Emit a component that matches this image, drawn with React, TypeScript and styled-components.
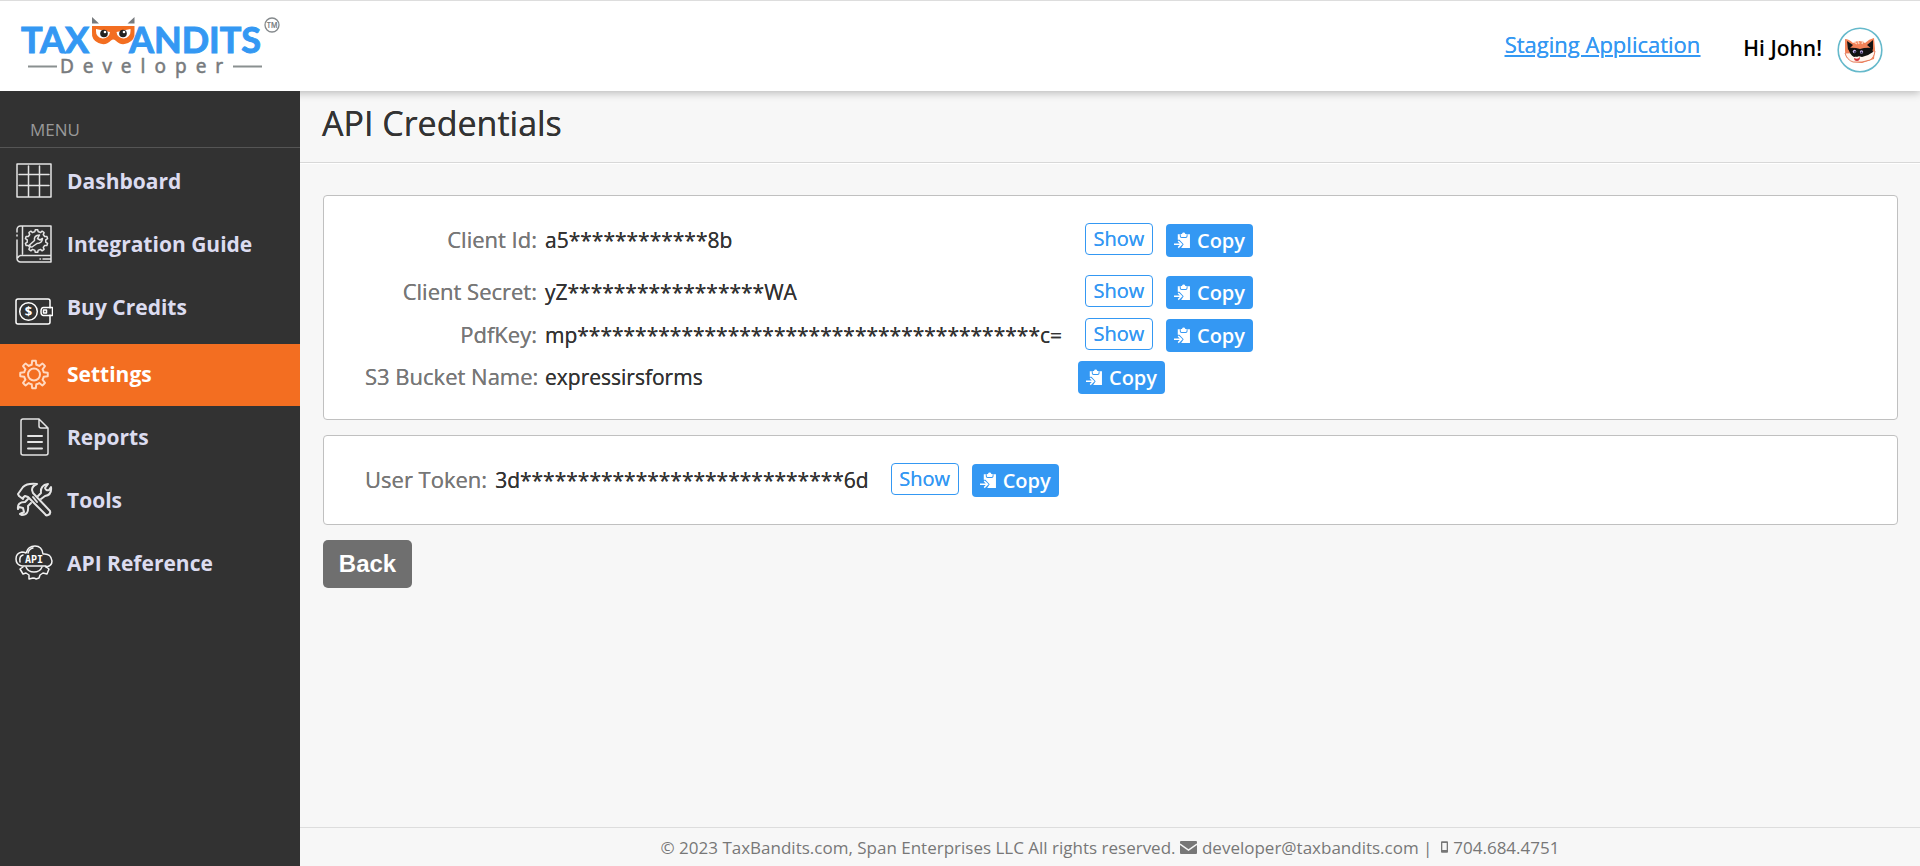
import React, { useState } from 'react';
import styled, { createGlobalStyle, css } from 'styled-components';

const GlobalStyle = createGlobalStyle`
  *, *::before, *::after { box-sizing: border-box; }
  body {
    margin: 0;
    background: #f7f7f7;
    color: #333;
    font-family: 'Open Sans', 'Noto Sans', sans-serif;
    font-size: 21px;
  }
`;

/* Medium weight: the regular face with its edges firmed up by a sharp shadow. */
const medium = css`
  font-family: 'Open Sans', sans-serif;
  font-weight: 500;
  text-shadow: 0 0 currentColor;
`;

const Shell = styled.div`
  display: flex;
  flex-direction: column;
  min-height: 100vh;
`;

const Header = styled.header`
  display: flex;
  justify-content: space-between;
  height: 91px;
  padding: 0 37px 0 20px;
  border-top: 1px solid #ddd;
  background: #fff;
  box-shadow: 0 2px 8px rgba(0, 0, 0, 0.25);
`;

const HomeLink = styled.a`
  display: block;
  padding-top: 15px;
`;

const UserArea = styled.div`
  display: flex;
  align-items: flex-start;
  padding-top: 26px;
`;

const StagingLink = styled.a`
  ${medium}
  margin-right: 43px;
  color: #3498f3;
  font-size: 22px;
  line-height: 34px;
`;

const Greeting = styled.span`
  margin-right: 15px;
  color: #000;
  font-weight: 600;
  line-height: 42px;
`;

const AvatarButton = styled.button`
  width: 46px;
  height: 46px;
  padding: 0;
  border: 0;
  background: none;
`;

const Body = styled.div`
  display: flex;
  flex: 1;
`;

const Sidebar = styled.nav`
  position: relative;
  flex: none;
  width: 300px;
  background: #323232;
`;

const MenuTitle = styled.div`
  height: 57px;
  padding: 28px 30px 0;
  border-bottom: 1px solid #555;
  color: #999;
  font-size: 17px;
  line-height: 22px;
`;

const MenuList = styled.ul`
  display: flex;
  flex-direction: column;
  gap: 1px;
  margin: 0;
  padding: 3px 0 0;
  list-style: none;
`;

const MenuLink = styled.a<{ $active?: boolean; $tall?: boolean }>`
  display: flex;
  align-items: center;
  gap: 14px;
  height: 62px;
  padding: 0 0 2px 15px;
  color: ${(p) => (p.$active ? '#fff' : '#dcdcf0')};
  background: ${(p) => (p.$active ? '#f36e21' : 'transparent')};
  font-weight: 700;
  text-decoration: none;
  ${(p) =>
    p.$tall &&
    css`
      margin-bottom: 4px;
    `}
`;

const Main = styled.div`
  display: flex;
  flex: 1;
  flex-direction: column;
  min-width: 0;
`;

const PageTitle = styled.h1`
  ${medium}
  height: 72px;
  margin: 0;
  padding-left: 22px;
  border-bottom: 1px solid #d8d8d8;
  box-shadow: 0 1px 0 #fff;
  font-size: 34px;
  line-height: 64px;
`;

const Content = styled.main`
  display: flex;
  flex: 1;
  flex-direction: column;
  align-items: stretch;
  gap: 15px;
  padding: 32px 22px 32px 23px;
`;

const Panel = styled.section<{ $tight?: boolean }>`
  padding: 27px 41px ${(p) => (p.$tight ? '25px' : '27px')};
  border: 1px solid #c0c0c0;
  border-radius: 4px;
  background: #fff;
`;

const Row = styled.div<{ $after?: number }>`
  display: flex;
  height: 34px;
  margin-bottom: ${(p) => p.$after ?? 0}px;
  line-height: 34px;
`;

const Label = styled.span<{ $column?: boolean }>`
  ${medium}
  flex: none;
  width: ${(p) => (p.$column ? '172px' : 'auto')};
  margin-right: 8px;
  color: #777;
  font-size: 22px;
  line-height: 32px;
  text-align: right;
  white-space: nowrap;
`;

const Value = styled.span<{ $column?: boolean }>`
  ${medium}
  flex: none;
  width: ${(p) => (p.$column ? '533px' : 'auto')};
  margin-right: ${(p) => (p.$column ? '0' : '15px')};
`;

const ShowButton = styled.button`
  ${medium}
  flex: none;
  width: 68px;
  height: 32px;
  margin: 0 13px 0 7px;
  padding: 0;
  border: 1px solid #3498f3;
  border-radius: 4px;
  color: #3498f3;
  background: #fff;
  font-size: 20px;
  line-height: 30px;
`;

const CopyButton = styled.button`
  display: flex;
  flex: none;
  align-items: center;
  gap: 7px;
  width: 87px;
  height: 33px;
  margin-top: 1px;
  padding: 0 8px;
  border: 0;
  border-radius: 4px;
  color: #fff;
  background: #3498f3;
  font: 600 20px/32px 'Open Sans', sans-serif;
`;

const BackButton = styled.button`
  align-self: flex-start;
  width: 89px;
  height: 48px;
  padding: 0;
  border: 0;
  border-radius: 5px;
  color: #fff;
  background: #6f6f6f;
  font: 700 24px 'Liberation Sans', Arial, sans-serif;
`;

const Footer = styled.footer`
  display: flex;
  align-items: center;
  justify-content: center;
  height: 39px;
  border-top: 1px solid #ddd;
  color: #777;
  font-size: 17px;
  white-space: pre;
`;

const FooterLink = styled.a`
  display: inline-flex;
  align-items: center;
  gap: 5px;
  color: inherit;
  text-decoration: none;
`;

function Logo() {
  return (
    <svg width="262" height="68" viewBox="20 16 262 68" role="img" aria-label="TaxBandits Developer">
      <g fill="#3498f3" stroke="#3498f3" strokeWidth="1" fontFamily="Lato, sans-serif" fontWeight="700" fontSize="36">
        <text x="21" y="53">TAX</text>
        <text x="129" y="53">ANDITS</text>
      </g>
      <path d="M92 17l7 6.500h-7zM134.500 17l-7 6.500h7z" fill="#777b7e" />
      <path d="M92 26h42.500v6a11 11 0 0 1-19 8.500 3.500 3.500 0 0 0-4.500 0A11 11 0 0 1 92 32z" fill="#f36e21" />
      <path d="M96 29l14 3a7 7 0 1 1-14-1zM130.500 29l-14 3a7 7 0 1 0 14-1z" fill="#fff" />
      <circle cx="104" cy="33.500" r="3.800" fill="#222" />
      <circle cx="123" cy="33.500" r="3.800" fill="#222" />
      <circle cx="105" cy="32" r="1.300" fill="#fff" />
      <circle cx="124" cy="32" r="1.300" fill="#fff" />
      <circle cx="272" cy="25" r="7" fill="none" stroke="#84898c" strokeWidth="1.300" />
      <text x="272" y="28" textAnchor="middle" fill="#777b7e" fontFamily="Inter, sans-serif" fontWeight="600" fontSize="7">TM</text>
      <path d="M28 66.500h29M233 66.500h29" stroke="#8a9090" strokeWidth="2" />
      <text x="60" y="73" fill="#777b7e" stroke="#777b7e" strokeWidth=".5" fontFamily="'Noto Sans', sans-serif" fontSize="19" letterSpacing="9">Developer</text>
    </svg>
  );
}

function Avatar() {
  return (
    <svg width="46" height="46" viewBox="0 0 46 46" aria-hidden="true">
      <circle cx="23" cy="23" r="21.800" fill="#fff" stroke="#65b9cb" strokeWidth="1.600" />
      <path d="M8 12q4 0 8 4 6-4 12 0 4-4 9-5l1 11-1 10-12 4-9-1-7-5-1-6z" fill="#f28258" />
      <path d="M10 14l6 4-5 5zM36 13l-6 5 6 5z" fill="#141414" />
      <path d="M17 15l3 2M21 14l1 3M26 14l-1 3" stroke="#fcd0b8" strokeWidth="1.500" />
      <path d="M8 26q15 0 30-2-1 7-5 9l-8 2H16q-6-2-8-9z" fill="#fff5ee" stroke="#e37553" strokeWidth=".9" />
      <path d="M11 21q6-1 12 1 6-2 12-1l1 4q-5 4-11 5l-4-1-4 1q-4-2-6-9z" fill="#111" />
      <circle cx="17.500" cy="24.500" r="1.700" fill="#cbb7eb" />
      <circle cx="24.500" cy="25" r="1.700" fill="#cbb7eb" />
      <circle cx="18" cy="25" r="1" fill="#27224a" />
      <circle cx="24.500" cy="25.500" r="1" fill="#27224a" />
      <ellipse cx="20" cy="28.500" rx="1.800" ry="1.300" fill="#111" />
      <path d="M17 31q4 2 6-1 0 4-3 4T17 31z" fill="#d2313a" />
    </svg>
  );
}

/* Outline of a cog: each tooth rises from the root radius to the tip radius. */
function cog(cx: number, cy: number, root: number, tip: number, teeth: number) {
  const step = (Math.PI * 2) / teeth;
  const at = (r: number, a: number) =>
    `${(cx + r * Math.sin(a)).toFixed(2)} ${(cy - r * Math.cos(a)).toFixed(2)}`;
  let d = '';
  for (let i = 0; i < teeth; i += 1) {
    const a = i * step;
    d += `${i ? 'L' : 'M'}${at(root, a - step * 0.3)}L${at(tip, a - step * 0.17)}A${tip} ${tip} 0 0 1 ${at(tip, a + step * 0.17)}L${at(root, a + step * 0.3)}A${root} ${root} 0 0 1 ${at(root, a + step * 0.7)}`;
  }
  return `${d}Z`;
}

const Glyph = styled.svg.attrs({ width: 38, height: 38, 'aria-hidden': true })<{ $tone?: string; $bold?: boolean }>`
  flex: none;
  fill: none;
  stroke: ${(p) => p.$tone ?? '#e4e4e4'};
  stroke-width: ${(p) => (p.$bold ? 2 : 1.5)};
  stroke-linecap: round;
  stroke-linejoin: round;
`;

const GridIcon = () => (
  <Glyph viewBox="0 0 38 38">
    <path d="M2 2h34v33H2zM13.500 4v30M24.500 4v30M4 12.500h30M4 23.500h30" />
  </Glyph>
);

const GuideIcon = () => (
  <Glyph viewBox="0 0 38 38">
    <path d="M6 1h30v36H5.500A3.500 3.500 0 0 1 2 33.500V15M2 11v-1M2 7V4.500A3.500 3.500 0 0 1 5.500 1M7.500 2v27M36 30.500H6a3 3 0 0 0-3 2M25 34h.5M28 34h7" />
    <path d={cog(21.500, 16, 9.300, 11.300, 10)} />
    <path d="M16 22l-1.500-2 5-4.500q-1-5 5-5.500l-2 3.500 2.500 1.500 2.500-1.500q-.5 5-5.500 5l-5 3.500" />
  </Glyph>
);

const WalletIcon = () => (
  <Glyph viewBox="0 -10 38 38" $tone="#fff">
    <path d="M35 10V3q0-2-2-2H3Q1 1 1 3v21q0 2 2 2h30q2 0 2-2v-7M37.500 9.500h-9q-2.500 0-2.500 4t2.500 4h9z" />
    <circle cx="13.500" cy="13.500" r="8.800" />
    <rect x="28.500" y="12" width="3" height="3" />
    <text x="13.500" y="18" textAnchor="middle" fill="#fff" stroke="none" fontSize="13" fontWeight="700">$</text>
  </Glyph>
);

const GearIcon = () => (
  <Glyph viewBox="0 0 38 38" $tone="#ffd9c2" $bold>
    <path d={cog(19, 19.500, 10, 13.800, 8)} />
    <circle cx="19" cy="19.500" r="6" />
  </Glyph>
);

const ReportIcon = () => (
  <Glyph viewBox="0 0 38 38">
    <path d="M8 1h16l9 9v25q0 2-2 2H8q-2 0-2-2V3q0-2 2-2zM24 1v7q0 2 2 2h7" />
    <path d="M13 18h14M13 24h14M13 30.500h14" strokeWidth="2" />
  </Glyph>
);

const ToolsIcon = () => (
  <Glyph viewBox="0 0 38 38" $bold>
    <path d="M4 15l-1-2 5-7q4-4 14-3-5 2-5 6l1 3 17 18q1 3-2 4-2 1-3-1L13 16l-3-1q-2 1-2 3z" />
    <path d="M23 15l3-3q-1-8 7-9l-3 4q1 3 4 2l2-3q1 8-6 9l-4 3M16 22l-3 3q1 9-6 9l-2-1 4-2-1-4-4-1-1 2q-1-7 7-7l3-3" />
    <path d="M18 16l4 5" />
  </Glyph>
);

const ApiIcon = () => (
  <Glyph viewBox="0 0 38 38" $tone="#f4f4f4">
    <path d="M7 22q-6-1-6-7 0-6 6-7 2 0 4 1 2-7 9-7 7 0 8 8 8-1 9 7 0 5-6 6M7 22h24M5 18q-1-6 3-7M13 9q1-4 5-5" />
    <path d="M8 23l-3 2 3 5 3-1 3 2v4l4-1q2 0 3 1l3-1 1-3 3-2 4 1 2-5-3-2" />
    <path d="M11 23q2 5 8 5t8-5" />
    <text x="19" y="19" textAnchor="middle" fill="#fff" stroke="none" fontFamily="'DejaVu Sans Mono', monospace" fontSize="10">API</text>
  </Glyph>
);

const PasteIcon = () => (
  <svg width="19" height="19" viewBox="0 0 19 19" aria-hidden="true">
    <path d="M4.500 2H19v16.500H8.500l3-4.500-5-5.500h-2z" fill="#fff" />
    <path d="M7.500 2v2.500q0 1.500 1.500 1.500h5q1.500 0 1.500-1.500V2" fill="#fff" stroke="#3498f3" strokeWidth="1.200" />
    <path d="M8 3.500q0-1.500 1.500-1.800Q10 0 11.500 0t2 1.700q1.500.3 1.500 1.800z" fill="#fff" />
    <path d="M0 14h8.500M5 10l4 4-4 4" fill="none" stroke="#fff" strokeWidth="1.800" />
  </svg>
);

const MailIcon = () => (
  <svg width="17" height="13" viewBox="0 0 17 13" aria-hidden="true">
    <rect width="17" height="13" rx="1" fill="#777" />
    <path d="M0 3l8.500 6L17 3" fill="none" stroke="#f7f7f7" strokeWidth="1.500" />
  </svg>
);

const PhoneIcon = () => (
  <svg width="7" height="12" viewBox="0 0 8 13" aria-hidden="true">
    <path d="M1 0h6q1 0 1 1v11q0 1-1 1H1q-1 0-1-1V1q0-1 1-1zM1.500 2v8h5V2z" fill="#777" fillRule="evenodd" />
  </svg>
);

const MENU = [
  { label: 'Dashboard', Icon: GridIcon },
  { label: 'Integration Guide', Icon: GuideIcon },
  { label: 'Buy Credits', Icon: WalletIcon, tall: true },
  { label: 'Settings', Icon: GearIcon },
  { label: 'Reports', Icon: ReportIcon },
  { label: 'Tools', Icon: ToolsIcon },
  { label: 'API Reference', Icon: ApiIcon },
];

const CREDENTIALS = [
  { label: 'Client Id:', value: `a5${'*'.repeat(12)}8b`, secret: true, after: 18 },
  { label: 'Client Secret:', value: `yZ${'*'.repeat(17)}WA`, secret: true, after: 9 },
  { label: 'PdfKey:', value: `mp${'*'.repeat(40)}c=`, secret: true, after: 8 },
  { label: 'S3 Bucket Name:', value: 'expressirsforms', secret: false, after: 0 },
];

const USER_TOKEN = `3d${'*'.repeat(28)}6d`;

const Copy = ({ value }: { value: string }) => (
  <CopyButton type="button" onClick={() => navigator.clipboard?.writeText(value)}>
    <PasteIcon />
    Copy
  </CopyButton>
);

export default function App() {
  const [active, setActive] = useState('Settings');
  return (
    <Shell>
      <GlobalStyle />
      <Header>
        <HomeLink href="#home">
          <Logo />
        </HomeLink>
        <UserArea>
          <StagingLink href="#staging">Staging Application</StagingLink>
          <Greeting>Hi John!</Greeting>
          <AvatarButton type="button" aria-label="Account">
            <Avatar />
          </AvatarButton>
        </UserArea>
      </Header>
      <Body>
        <Sidebar>
          <MenuTitle>MENU</MenuTitle>
          <MenuList>
            {MENU.map(({ label, Icon, tall }) => (
              <li key={label}>
                <MenuLink href="#menu" $active={label === active} $tall={tall} onClick={() => setActive(label)}>
                  <Icon />
                  {label}
                </MenuLink>
              </li>
            ))}
          </MenuList>
        </Sidebar>
        <Main>
          <PageTitle>API Credentials</PageTitle>
          <Content>
            <Panel $tight>
              {CREDENTIALS.map((c) => (
                <Row key={c.label} $after={c.after}>
                  <Label $column>{c.label}</Label>
                  <Value $column>{c.value}</Value>
                  {c.secret && <ShowButton type="button">Show</ShowButton>}
                  <Copy value={c.value} />
                </Row>
              ))}
            </Panel>
            <Panel>
              <Row>
                <Label>User Token:</Label>
                <Value>{USER_TOKEN}</Value>
                <ShowButton type="button">Show</ShowButton>
                <Copy value={USER_TOKEN} />
              </Row>
            </Panel>
            <BackButton type="button">Back</BackButton>
          </Content>
          <Footer>
            {'© 2023 TaxBandits.com, Span Enterprises LLC All rights reserved. '}
            <FooterLink href="mailto:developer@taxbandits.com">
              <MailIcon />
              developer@taxbandits.com
            </FooterLink>
            {' |  '}
            <FooterLink href="tel:7046844751">
              <PhoneIcon />
              704.684.4751
            </FooterLink>
          </Footer>
        </Main>
      </Body>
    </Shell>
  );
}
